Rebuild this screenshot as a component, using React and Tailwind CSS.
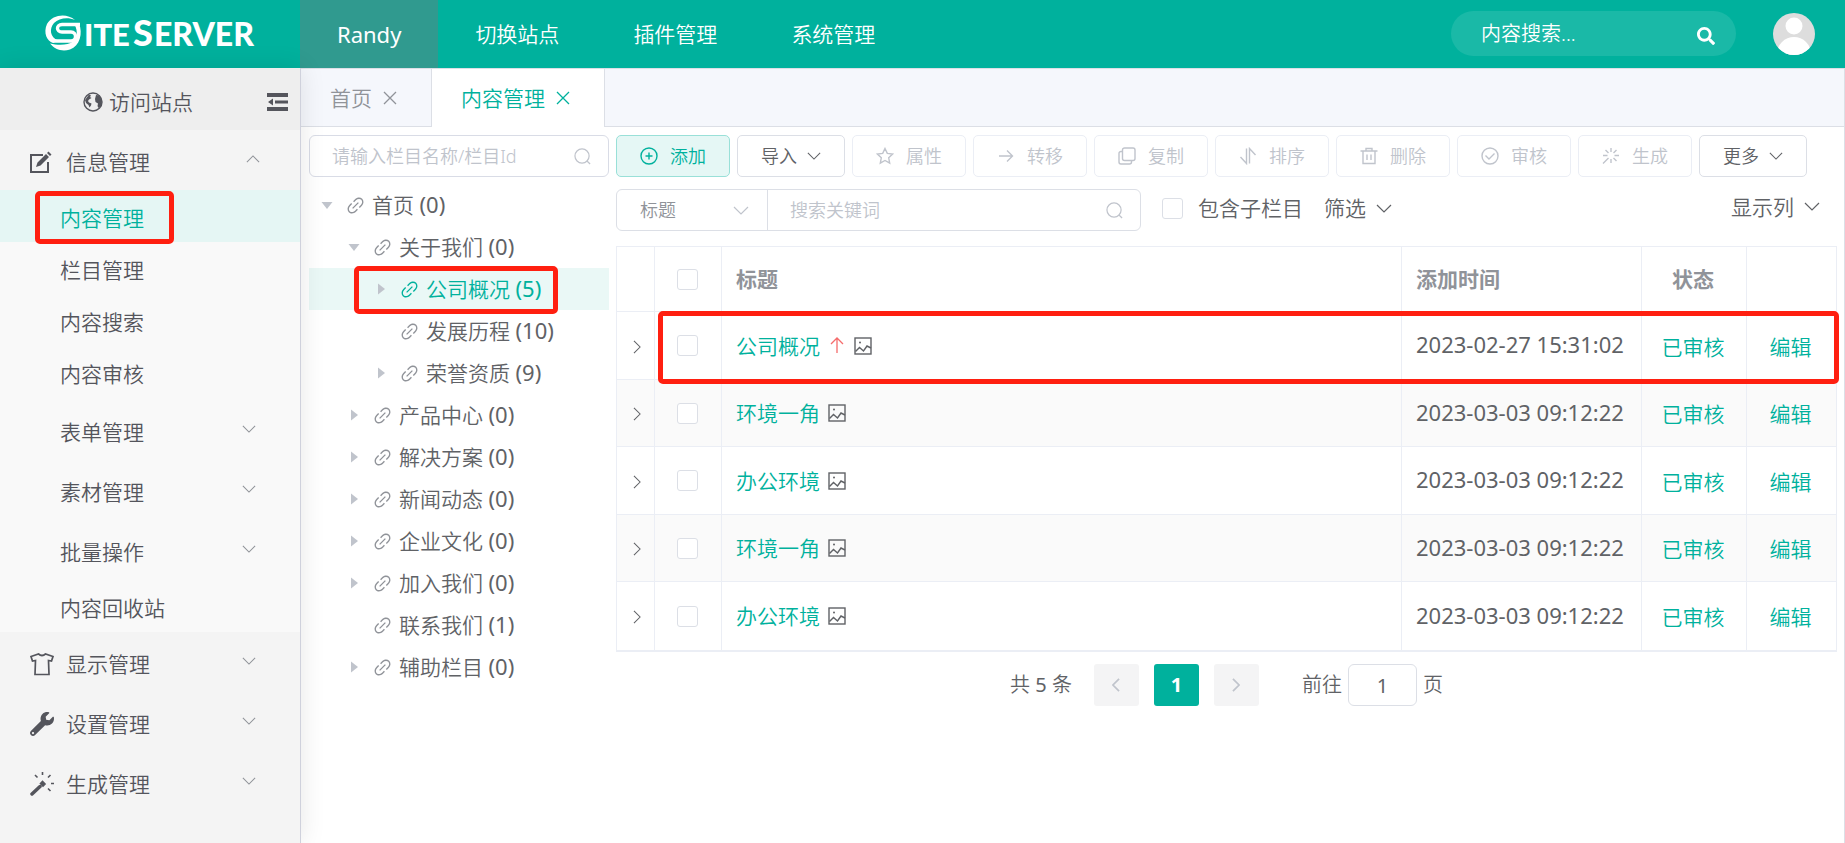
import { useState } from 'react';
import { FaSearch, FaWrench } from 'react-icons/fa';

const NAV = ['切换站点', '插件管理', '系统管理'];

const TREE = [
  { name: '首页', count: 0, level: 0, caret: 'open' },
  { name: '关于我们', count: 0, level: 1, caret: 'open' },
  { name: '公司概况', count: 5, level: 2, caret: 'closed', active: true },
  { name: '发展历程', count: 10, level: 2 },
  { name: '荣誉资质', count: 9, level: 2, caret: 'closed' },
  { name: '产品中心', count: 0, level: 1, caret: 'closed' },
  { name: '解决方案', count: 0, level: 1, caret: 'closed' },
  { name: '新闻动态', count: 0, level: 1, caret: 'closed' },
  { name: '企业文化', count: 0, level: 1, caret: 'closed' },
  { name: '加入我们', count: 0, level: 1, caret: 'closed' },
  { name: '联系我们', count: 1, level: 1 },
  { name: '辅助栏目', count: 0, level: 1, caret: 'closed' },
];

const LEVEL_PADDING = ['pl-[10px]', 'pl-[37px]', 'pl-[64px]'];

const ROWS = [
  { id: 1, title: '公司概况', date: '2023-02-27 15:31:02', top: true },
  { id: 2, title: '环境一角', date: '2023-03-03 09:12:22' },
  { id: 3, title: '办公环境', date: '2023-03-03 09:12:22' },
  { id: 4, title: '环境一角', date: '2023-03-03 09:12:22' },
  { id: 5, title: '办公环境', date: '2023-03-03 09:12:22' },
];

function Svg({ children, className, box = 24, width = 1.5 }) {
  return (
    <svg viewBox={`0 0 ${box} ${box}`} className={className} fill="none" stroke="currentColor" strokeWidth={width} aria-hidden="true">
      {children}
    </svg>
  );
}

function Chevron({ className }) {
  return (
    <svg viewBox="0 0 16 9" className={className} fill="none" stroke="currentColor" strokeWidth="1.2" aria-hidden="true">
      <path d="M1 1l7 7 7-7" />
    </svg>
  );
}

function LinkIcon({ className }) {
  return (
    <svg viewBox="110 110 804 804" className={className} fill="currentColor" aria-hidden="true">
      <path d="M715.648 625.152 670.4 579.904l90.496-90.56c75.008-74.944 85.12-186.368 22.656-248.896-62.528-62.464-173.952-52.352-248.96 22.656L444.16 353.6l-45.248-45.248 90.496-90.496c100.032-99.968 251.968-110.08 339.456-22.656 87.488 87.488 77.312 239.424-22.656 339.456l-90.496 90.496zm-90.496 90.496-90.496 90.496C434.624 906.112 282.688 916.224 195.2 828.8c-87.488-87.488-77.312-239.424 22.656-339.456l90.496-90.496 45.248 45.248-90.496 90.56c-75.008 74.944-85.12 186.368-22.656 248.896 62.528 62.464 173.952 52.352 248.96-22.656l90.496-90.496zm0-362.048 45.248 45.248L398.848 670.4 353.6 625.152 625.152 353.6z" />
    </svg>
  );
}

function GlobeIcon() {
  return (
    <Svg className="size-5" box={20} width={1.4}>
      <circle cx="10" cy="10" r="9" />
      <path d="M6 2.500L8 3.500 7 5 8.500 6 6 7.500 5 9l1 1.500 2.500 1-.5 2L6.500 15.500 5.500 13 3 11 2 8z" fill="currentColor" stroke="none" />
      <path d="M13 3l3.500.5L19 8.500l-.5 5-3 2.500-1-2 .5-2.500-2.500-1.500-.5-3L12.500 5z" fill="currentColor" stroke="none" />
    </Svg>
  );
}

function SearchIcon({ className }) {
  return (
    <Svg className={className} box={18} width={1.3}>
      <circle cx="8.500" cy="8.500" r="7.500" />
      <path d="M13.500 13.500l3.500 3.500" />
    </Svg>
  );
}

function CloseIcon() {
  return (
    <Svg className="size-[14px]" box={14} width={1.3}>
      <path d="M1 1l12 12M13 1L1 13" />
    </Svg>
  );
}

function PictureIcon() {
  return (
    <Svg className="size-[18px] text-[#606266]" box={18} width={1.4}>
      <rect x="1" y="1" width="16" height="16" />
      <circle cx="6" cy="5.500" r="1" fill="currentColor" stroke="none" />
      <path d="M1.500 14.500l4-4 4 3.500L13 9l4 2" />
    </Svg>
  );
}

function Logo() {
  return (
    <svg viewBox="0 0 214 48" className="h-12 w-[214px]" fill="#fff" role="img" aria-label="SiteServer">
      <g transform="translate(2 7)">
        <path d="M30 5C22-2 8-1 2 9-2 18 2 26 8 28l5-2.500C5 22 4 14 9 8c5-5 14-6 21-3z" />
        <path d="M35 9.500H17c-6 0-6 7.500 0 7.500h9c6 0 6 9 0 9H8" fill="none" stroke="#fff" strokeWidth="3.4" />
        <path d="M34 8.500c4 10 1 22-9 26-8 2.500-15 0-20-6 8 2 18 2 23-2 4-4 5-10 2-16z" />
      </g>
      <g fontFamily="Lato, 'Liberation Sans', sans-serif" fontWeight="900">
        <text x="41" y="38" fontSize="31">ITE</text>
        <text x="90" y="38" fontSize="36">S</text>
        <text x="111" y="38" fontSize="32">ERVER</text>
      </g>
    </svg>
  );
}

function Header() {
  return (
    <header className="flex h-[68px] items-center bg-[#00b19d] text-[21px] text-white">
      <a href="#home" className="flex w-[300px] justify-center pb-[4px]">
        <Logo />
      </a>
      <nav className="flex h-full">
        <a href="#randy" className="flex items-center bg-[#309a8f] px-[37px] text-[22px] font-normal">Randy</a>
        {NAV.map((item) => (
          <a key={item} href="#nav" className="flex items-center px-[37px]">{item}</a>
        ))}
      </nav>
      <form className="mr-[37px] mb-px ml-auto flex h-[45px] w-[285px] items-center rounded-full bg-white/10 pr-[21px] pl-[30px]">
        <input aria-label="内容搜索" placeholder="内容搜索..." className="min-w-0 flex-1 text-[20px] outline-none placeholder:text-white" />
        <button type="button" aria-label="搜索" className="mt-1">
          <FaSearch className="size-[18px]" />
        </button>
      </form>
      <button type="button" aria-label="用户" className="mr-[30px] mb-px">
        <svg viewBox="0 0 42 42" className="size-[42px]">
          <clipPath id="avatar"><circle cx="21" cy="21" r="21" /></clipPath>
          <g clipPath="url(#avatar)">
            <rect width="42" height="42" fill="#ddd" />
            <circle cx="21" cy="13" r="8.500" fill="#fff" />
            <ellipse cx="21" cy="41" rx="17" ry="17" fill="#fff" />
          </g>
        </svg>
      </button>
    </header>
  );
}

function MenuGroup({ icon, label, open }) {
  return (
    <button type="button" className="flex h-[60px] w-full items-center pt-[3px] pl-[30px] text-left">
      {icon}
      <span className={icon ? 'flex-1 pl-3' : 'flex-1 pl-[30px]'}>{label}</span>
      <Chevron className={open ? 'mr-10 mb-[6px] h-2 w-[14px] rotate-180 text-[#909399]' : 'mr-11 mb-[6px] h-2 w-[14px] text-[#909399]'} />
    </button>
  );
}

function MenuLeaf({ label, active }) {
  return (
    <a href="#menu" className={active ? 'relative flex h-[52px] items-center bg-[#e5f6f4] pt-1 pl-[60px] text-[#00b19d]' : 'flex h-[52px] items-center pt-1 pl-[60px]'}>
      {label}
      {active && <span className="absolute top-px left-[35px] h-[53px] w-[139px] rounded-[5px] border-[5px] border-[#ff1f10]" />}
    </a>
  );
}

function Sidebar() {
  return (
    <aside className="relative z-10 w-[301px] shrink-0 border-r border-[#cfd1dc] bg-[#f4f4f4] text-[#54555c] shadow-[0_0_24px_rgba(0,0,0,0.1)]">
      <div className="flex h-[62px] items-center bg-[#eee] pt-[5px] pr-3">
        <a href="#site" className="flex flex-1 items-center justify-end gap-[6px]">
          <GlobeIcon />
          访问站点
        </a>
        <button type="button" aria-label="收起菜单" className="ml-[74px]">
          <svg viewBox="0 0 21 18" className="h-[18px] w-[21px]" fill="currentColor">
            <path d="M0 0h21v4H0zM8 7.500h13v3H8zM0 14h21v4H0zM6 5.500v7L1 9z" />
          </svg>
        </button>
      </div>
      <MenuGroup
        open
        label="信息管理"
        icon={
          <Svg className="size-6" width={2}>
            <path d="M13 5H1v17h17V12" />
            <path d="M6 17l1.500-4.500L16 4l3 3-8.500 8.500zM17 3l1.500-1.500 3 3L20 6z" fill="currentColor" stroke="none" />
          </Svg>
        }
      />
      <div className="bg-[#f9f9f9]">
        <div className="pb-[2px]">
          <MenuLeaf active label="内容管理" />
          <MenuLeaf label="栏目管理" />
          <MenuLeaf label="内容搜索" />
          <MenuLeaf label="内容审核" />
        </div>
        <MenuGroup label="表单管理" />
        <MenuGroup label="素材管理" />
        <MenuGroup label="批量操作" />
        <MenuLeaf label="内容回收站" />
      </div>
      <MenuGroup
        label="显示管理"
        icon={
          <Svg className="size-6" width={1.7}>
            <path d="M8.500 2Q12 5 15.500 2L23 4.500 21.500 9 18.500 8.500 19 22.500H5L5.500 8.500 2.500 9 1 4.500z" />
          </Svg>
        }
      />
      <MenuGroup label="设置管理" icon={<FaWrench className="size-6" />} />
      <MenuGroup
        label="生成管理"
        icon={
          <Svg className="size-6" width={1.6}>
            <path d="M2 22L10 14.500" strokeWidth="3.5" strokeLinecap="round" />
            <path d="M10.500 11.500l2-2 2.500 2.500-2 2z" fill="currentColor" />
            <path d="M12.500 0v3M5 3l2.500 2.500M20.500 3L18 5.500M21 11.500h3M18 16.500l2.500 2.500" />
          </Svg>
        }
      />
    </aside>
  );
}

function TabBar() {
  return (
    <div className="flex h-[59px] border-t border-[#dcdfe6] bg-[#f5f7fc]">
      <div className="flex items-center gap-[11px] border-r border-b border-[#dcdfe6] pr-[34px] pl-[29px] text-[#909399]">
        <a href="#index">首页</a>
        <button type="button" aria-label="关闭首页"><CloseIcon /></button>
      </div>
      <div className="flex items-center gap-[11px] border-r border-[#dcdfe6] bg-white pr-[34px] pl-[29px] text-[#00b19d]">
        <a href="#content">内容管理</a>
        <button type="button" aria-label="关闭内容管理"><CloseIcon /></button>
      </div>
      <div className="flex-1 border-b border-[#dcdfe6]" />
    </div>
  );
}

function ChannelTree() {
  return (
    <div className="w-[300px] shrink-0">
      <label className="flex h-[42px] items-center rounded-md border border-[#d9dce6] pr-[17px] pl-[22px]">
        <input aria-label="栏目搜索" placeholder="请输入栏目名称/栏目Id" className="min-w-0 flex-1 text-[18px] outline-none placeholder:text-[#c0c4cc]" />
        <SearchIcon className="size-[17px] text-[#c0c4cc]" />
      </label>
      <ul className="pt-[7px]">
        {TREE.map((node) => (
          <li key={node.name} className={node.active ? 'relative bg-[#eaf8f6] text-[#00b19d]' : 'text-[#606266]'}>
            <a href="#channel" className={`flex h-[42px] items-center ${LEVEL_PADDING[node.level]}`}>
              <svg viewBox="0 0 16 16" className="size-4 text-[#c0c4cc]" fill="currentColor" aria-hidden="true">
                {node.caret === 'open' && <path d="M2.500 5h11L8 12z" />}
                {node.caret === 'closed' && <path d="M5 2.500v11L12 8z" />}
              </svg>
              <LinkIcon className={node.active ? 'ml-3 size-[17px]' : 'ml-3 size-[17px] text-[#909399]'} />
              <span className="pb-px pl-2">
                {node.name} <span className="text-[22px] font-normal">({node.count})</span>
              </span>
            </a>
            {node.active && <span className="absolute -top-[2px] left-[45px] h-12 w-[204px] rounded-[5px] border-[5px] border-[#ff1f10]" />}
          </li>
        ))}
      </ul>
    </div>
  );
}

function ToolButton({ label, children, primary }) {
  return (
    <button
      type="button"
      disabled={!primary}
      className={
        primary
          ? 'flex h-[42px] w-[114px] items-center justify-center gap-3 rounded-[5px] border border-[#99e0d8] bg-[#e5f7f5] text-[#00b19d]'
          : 'flex h-[42px] w-[114px] items-center justify-center gap-3 rounded-[5px] border border-[#ebeef5] text-[#c0c4cc]'
      }
    >
      <Svg className="size-[18px]" box={18} width={1.4}>{children}</Svg>
      {label}
    </button>
  );
}

function DropButton({ label }) {
  return (
    <button type="button" className="flex h-[42px] w-[108px] items-center justify-center gap-[10px] rounded-[5px] border border-[#dcdfe6] text-[#606266]">
      {label}
      <Chevron className="h-2 w-[14px]" />
    </button>
  );
}

function Toolbar() {
  return (
    <div className="flex flex-wrap gap-[7px] text-[18px]">
      <ToolButton primary label="添加">
        <circle cx="9" cy="9" r="8" />
        <path d="M9 5.500v7M5.500 9h7" />
      </ToolButton>
      <DropButton label="导入" />
      <ToolButton label="属性">
        <path d="M9 1.500l2.300 4.900 5.300.7-3.900 3.700 1 5.300L9 13.500l-4.700 2.600 1-5.300L1.400 7.100l5.300-.7z" />
      </ToolButton>
      <ToolButton label="转移"><path d="M2 9h13M10 3.500L15.500 9 10 14.500" /></ToolButton>
      <ToolButton label="复制">
        <rect x="4.500" y="1" width="12.500" height="12.500" rx="2" />
        <path d="M4.500 4.500H3a2 2 0 0 0-2 2V15a2 2 0 0 0 2 2h8.500a2 2 0 0 0 2-2v-1.500" />
      </ToolButton>
      <ToolButton label="排序"><path d="M7.500 1.500v15L1.500 10M10.500 16.500v-15L16.500 8" /></ToolButton>
      <ToolButton label="删除"><path d="M.5 4h17M6 4V1.500h6V4M3 4v12.500h12V4M7 7.500v5.500M11 7.500v5.500" /></ToolButton>
      <ToolButton label="审核">
        <circle cx="9" cy="9" r="8" />
        <path d="M4.500 8.500l3.500 3.500 5.500-5.500" />
      </ToolButton>
      <ToolButton label="生成">
        <path d="M9 1v4M9 12v4M12.500 8.500H17M1 8.500h4.500M3.500 3l3 3M14.500 3l-3 3M11.500 11l3 3M6.500 11L1 16.500" />
      </ToolButton>
      <DropButton label="更多" />
    </div>
  );
}

function Checkbox({ label }) {
  return (
    <input type="checkbox" aria-label={label} className="block size-[21px] appearance-none rounded-[3px] border border-[#dcdfe6] bg-white checked:bg-[#00b19d]" />
  );
}

function Filters() {
  return (
    <div className="mt-3 flex items-center">
      <div className="flex h-[42px] w-[525px] rounded-md border border-[#dcdfe6] text-[18px]">
        <div className="relative flex w-[151px] items-center border-r border-[#dcdfe6]">
          <select aria-label="搜索字段" className="size-full appearance-none pl-[23px] text-[#909399] outline-none">
            <option>标题</option>
          </select>
          <Chevron className="pointer-events-none absolute right-[18px] h-[9px] w-4 text-[#c0c4cc]" />
        </div>
        <label className="flex flex-1 items-center pr-[17px] pl-[22px]">
          <input aria-label="关键词" placeholder="搜索关键词" className="min-w-0 flex-1 outline-none placeholder:text-[#c0c4cc]" />
          <SearchIcon className="size-[17px] text-[#c0c4cc]" />
        </label>
      </div>
      <div className="flex flex-1 items-center pb-1 text-[#606266]">
        <label className="ml-[21px] flex items-center gap-[15px]">
          <Checkbox />
          包含子栏目
        </label>
        <button type="button" className="ml-[21px] flex items-center gap-[10px]">
          筛选
          <Chevron className="h-[9px] w-4" />
        </button>
        <button type="button" className="mr-[17px] mb-[3px] ml-auto flex items-center gap-[10px]">
          显示列
          <Chevron className="h-[9px] w-4" />
        </button>
      </div>
    </div>
  );
}

function ContentTable() {
  return (
    <div className="relative mt-[15px]">
      <table className="w-full table-fixed border-separate border-spacing-0 border-t border-b-2 border-l border-[#ebeef5] text-[#606266] [&_td]:border-r [&_td]:border-[#ebeef5] [&_th]:border-r [&_th]:border-b [&_th]:border-[#ebeef5] [&_tr:not(:last-child)>td]:border-b">
        <colgroup>
          <col className="w-[38px]" />
          <col className="w-[67px]" />
          <col />
          <col className="w-[240px]" />
          <col className="w-[105px]" />
          <col className="w-[90px]" />
        </colgroup>
        <thead>
          <tr className="h-[65px] text-[#909399]">
            <th />
            <th className="pl-[22px]"><Checkbox label="全选" /></th>
            <th className="pl-[14px] text-left font-bold">标题</th>
            <th className="pl-[14px] text-left font-bold">添加时间</th>
            <th className="pr-[2px] font-bold">状态</th>
            <th />
          </tr>
        </thead>
        <tbody>
          {ROWS.map((row) => (
            <tr key={row.id} className="odd:h-[68px] even:h-[67px] even:bg-[#fafafa] last:h-[66px]">
              <td>
                <button type="button" aria-label="展开" className="flex w-full justify-center pt-[2px] pl-[2px]">
                  <Chevron className="h-2 w-[14px] -rotate-90" />
                </button>
              </td>
              <td className="pl-[22px]"><Checkbox label={`选择${row.title}`} /></td>
              <td className="pl-[14px]">
                <div className="flex items-center gap-2">
                  <a href="#view" className="text-[#00b19d]">{row.title}</a>
                  {row.top && (
                    <Svg className="size-[18px] text-[#f56c6c]" box={18} width={1.3}>
                      <path d="M9 16V1M3 7l6-6 6 6" />
                    </Svg>
                  )}
                  <PictureIcon />
                </div>
              </td>
              <td className="pb-[3px] pl-[14px] text-[22px] font-normal whitespace-nowrap">{row.date}</td>
              <td className="pt-[2px] pr-[2px] text-center"><a href="#state" className="text-[#00b19d]">已审核</a></td>
              <td className="pt-[2px] pr-[2px] text-center"><a href="#edit" className="text-[#00b19d]">编辑</a></td>
            </tr>
          ))}
        </tbody>
      </table>
      <span className="pointer-events-none absolute top-[65px] -right-[2px] left-[42px] h-[73px] rounded-[5px] border-[5px] border-[#ff1f10]" />
    </div>
  );
}

function Pagination() {
  const [page, setPage] = useState('1');

  return (
    <div className="mt-3 flex items-center justify-center text-[20px] text-[#606266]">
      <span>共 <span className="font-normal">5</span> 条</span>
      <button type="button" aria-label="上一页" disabled className="ml-[22px] flex h-[42px] w-[45px] items-center justify-center rounded-[3px] bg-[#f4f4f5] text-[#c0c4cc]">
        <Chevron className="h-2 w-[14px] rotate-90 stroke-2" />
      </button>
      <button type="button" className="ml-[15px] h-[42px] w-[45px] rounded-[3px] bg-[#00b19d] font-bold text-white">1</button>
      <button type="button" aria-label="下一页" disabled className="ml-[15px] flex h-[42px] w-[45px] items-center justify-center rounded-[3px] bg-[#f4f4f5] text-[#c0c4cc]">
        <Chevron className="h-2 w-[14px] -rotate-90 stroke-2" />
      </button>
      <label className="ml-[43px] flex items-center gap-[6px]">
        前往
        <input value={page} onChange={(e) => setPage(e.target.value)} className="h-[42px] w-[69px] rounded-md border border-[#dcdfe6] text-center font-normal outline-none" />
        页
      </label>
    </div>
  );
}

export default function App() {
  return (
    <div className="flex min-h-screen flex-col bg-white font-['Noto_Sans','Noto_Sans_CJK_SC',sans-serif] text-[21px] leading-8 font-[350]">
      <Header />
      <div className="flex flex-1">
        <Sidebar />
        <main className="min-w-0 flex-1 border-r border-[#dcdfe6]">
          <TabBar />
          <div className="flex gap-[7px] pt-2 pr-[7px] pl-2">
            <ChannelTree />
            <div className="min-w-0 flex-1">
              <Toolbar />
              <Filters />
              <ContentTable />
              <Pagination />
            </div>
          </div>
        </main>
      </div>
    </div>
  );
}
